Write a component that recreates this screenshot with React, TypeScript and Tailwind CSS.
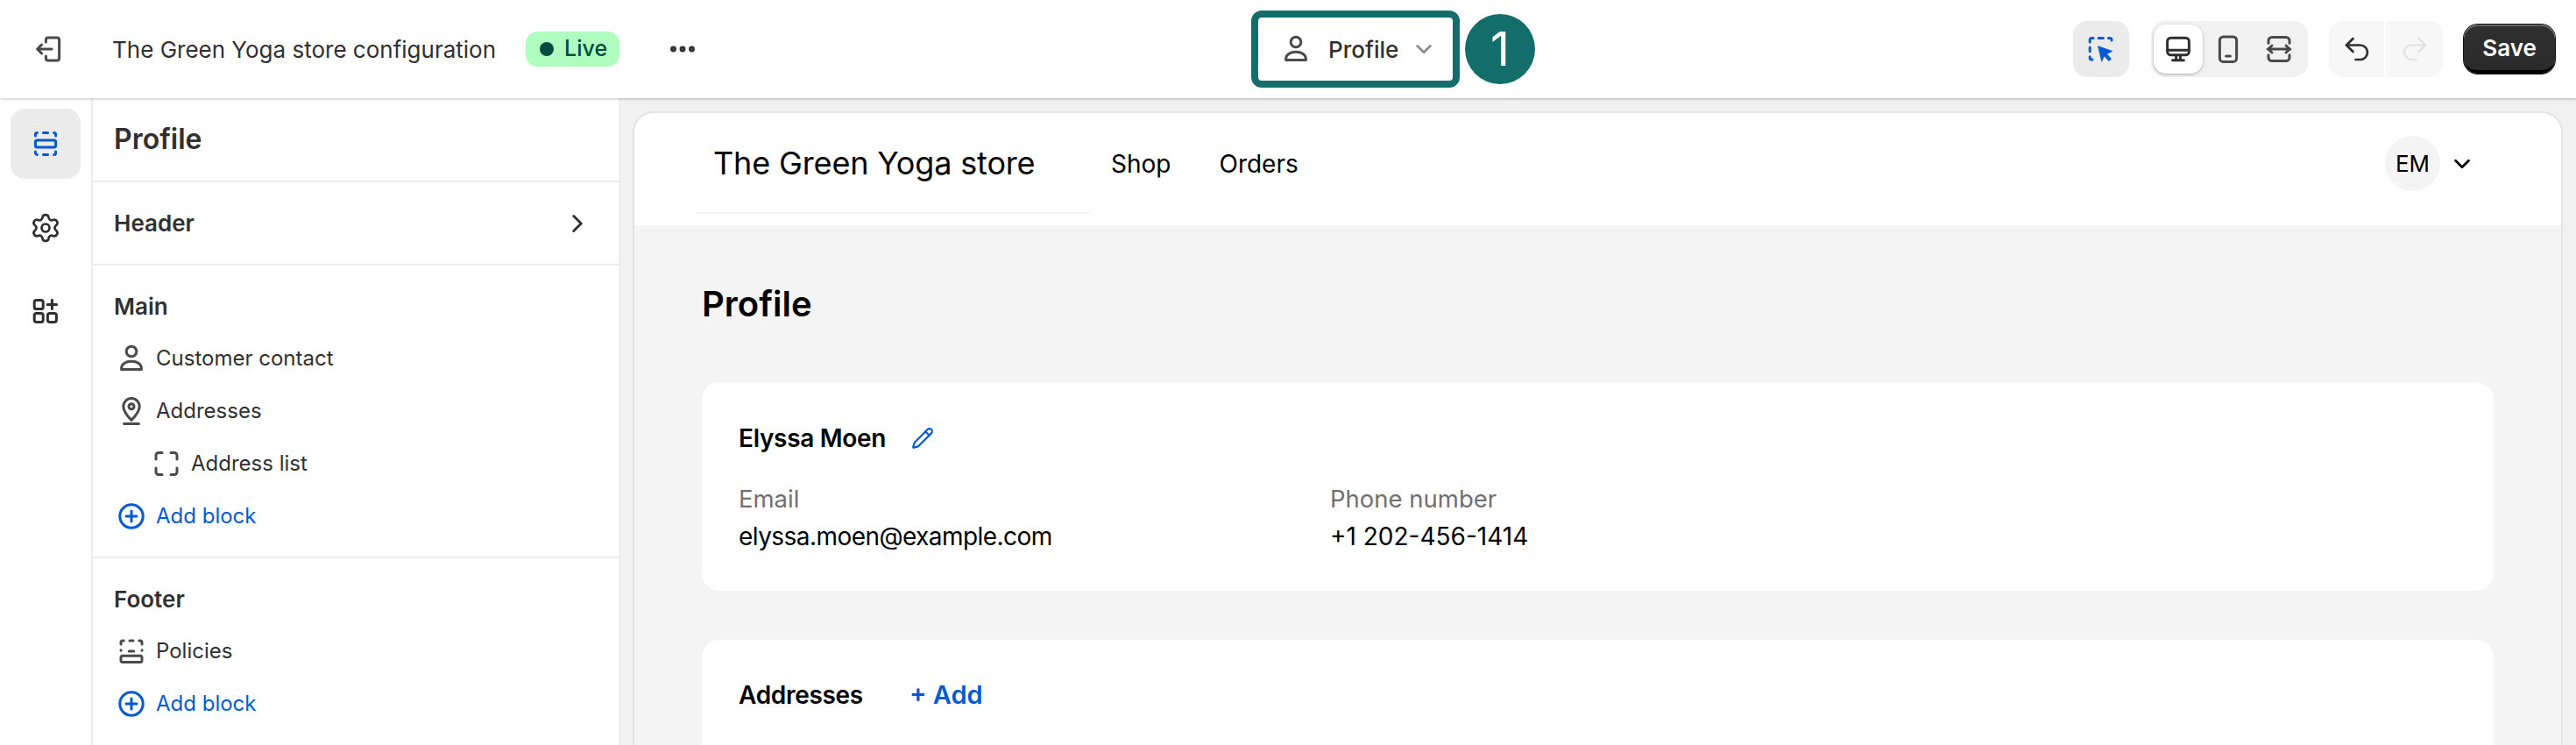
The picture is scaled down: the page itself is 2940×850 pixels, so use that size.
import React from "react";
import { Settings, ChevronDown, ChevronRight, Undo2, Redo2, Ellipsis, Pencil } from "lucide-react";

function ExitIcon() {
  return (
    <svg width="40" height="40" viewBox="0 0 20 20" fill="none" stroke="#4a4a4a" strokeWidth="1.5" strokeLinecap="round" strokeLinejoin="round">
      <path d="M8.2 6V4.8a1.3 1.3 0 0 1 1.3-1.3h5a1.3 1.3 0 0 1 1.3 1.3v10.4a1.3 1.3 0 0 1-1.3 1.3h-5a1.3 1.3 0 0 1-1.3-1.3V14" />
      <path d="M11.5 10H3.5M5.8 7.5 3.3 10l2.5 2.5" />
    </svg>
  );
}

function SectionsIcon({ color = "#005bd3" }: { color?: string }) {
  return (
    <svg width="40" height="40" viewBox="0 0 20 20" fill="none" stroke={color} strokeWidth="1.5" strokeLinecap="round">
      <rect x="4.2" y="8" width="11.6" height="4" rx="1" />
      <path d="M4.2 5.5V4.8a1 1 0 0 1 1-1M8.7 3.8h2.6M14.8 3.8a1 1 0 0 1 1 1v.7" />
      <path d="M4.2 14.5v.7a1 1 0 0 0 1 1M8.7 16.2h2.6M14.8 16.2a1 1 0 0 0 1-1v-.7" />
    </svg>
  );
}

function AppsIcon() {
  return (
    <svg width="40" height="40" viewBox="0 0 20 20" fill="none" stroke="#303030" strokeWidth="1.5" strokeLinecap="round">
      <rect x="3.6" y="3.3" width="5" height="5" rx="1.2" />
      <rect x="3.6" y="10.7" width="5" height="5" rx="1.2" />
      <rect x="11.2" y="10.7" width="5" height="5" rx="1.2" />
      <path d="M13.7 3.1v5.2M11.1 5.7h5.2" />
    </svg>
  );
}

function PersonIcon() {
  return (
    <svg width="40" height="40" viewBox="0 0 20 20" fill="none" stroke="#4a4a4a" strokeWidth="1.5" strokeLinejoin="round">
      <circle cx="10" cy="6" r="2.9" />
      <path d="M4.3 15.6c0-2.4 2.4-4 5.7-4s5.7 1.6 5.7 4v.6H4.3z" />
    </svg>
  );
}

function PinIcon() {
  return (
    <svg width="40" height="40" viewBox="0 0 20 20" fill="none" stroke="#4a4a4a" strokeWidth="1.5" strokeLinecap="round" strokeLinejoin="round">
      <path d="M10 15.2c-2.4-2.4-4.6-5-4.6-7.8a4.6 4.6 0 0 1 9.2 0c0 2.8-2.2 5.4-4.6 7.8z" />
      <circle cx="10" cy="7.4" r="1.5" />
      <path d="M5.8 17.2h8.4" />
    </svg>
  );
}

function BlockIcon() {
  return (
    <svg width="40" height="40" viewBox="0 0 20 20" fill="none" stroke="#4a4a4a" strokeWidth="1.5" strokeLinecap="round">
      <path d="M4 7.5V5.2A1.5 1.5 0 0 1 5.5 3.7h2M12.5 3.7h2A1.5 1.5 0 0 1 16 5.2v2.3" />
      <path d="M4 12.5v2.3a1.5 1.5 0 0 0 1.5 1.5h2M12.5 16.3h2a1.5 1.5 0 0 0 1.5-1.5v-2.3" />
    </svg>
  );
}

function FooterIcon() {
  return (
    <svg width="40" height="40" viewBox="0 0 20 20" fill="none" stroke="#4a4a4a" strokeWidth="1.5" strokeLinecap="round">
      <rect x="4" y="12.6" width="12" height="3.6" rx="1" />
      <path d="M4 6V5a1 1 0 0 1 1-1h.6M9 4h2M14.4 4h.6a1 1 0 0 1 1 1v1M4 9.4v.2M16 9.4v.2M8.6 10h2.8" />
    </svg>
  );
}

function PlusCircleIcon() {
  return (
    <svg width="40" height="40" viewBox="0 0 20 20" fill="none" stroke="#005bd3" strokeWidth="1.5" strokeLinecap="round">
      <circle cx="10" cy="10" r="6.6" />
      <path d="M10 7v6M7 10h6" />
    </svg>
  );
}

function InspectorIcon() {
  return (
    <svg width="40" height="40" viewBox="0 0 20 20" fill="none" stroke="#005bd3" strokeWidth="1.5" strokeLinecap="round">
      <path d="M3.6 6V4.8a1 1 0 0 1 1-1h1M8.6 3.8h2.6M14.2 3.8h.8a1 1 0 0 1 1 1V5M3.6 9v2.4M3.6 14.4v.6a1 1 0 0 0 1 1H5" />
      <path d="M8.4 8.4l8 2.8-3.2 1.5 2.6 2.9-1.4 1.2-2.6-2.9-1.4 3z" fill="#005bd3" strokeWidth="0.4" strokeLinejoin="round" />
    </svg>
  );
}

function DesktopIcon() {
  return (
    <svg width="40" height="40" viewBox="0 0 20 20" fill="none" stroke="#303030" strokeWidth="1.5" strokeLinecap="round">
      <rect x="3.8" y="3.6" width="12.4" height="9.8" rx="2" />
      <path d="M3.8 10.6h12.4M8.8 13.6v2.6M11.2 13.6v2.6M6.8 16.4h6.4" />
    </svg>
  );
}

function PhoneIcon() {
  return (
    <svg width="40" height="40" viewBox="0 0 20 20" fill="none" stroke="#4a4a4a" strokeWidth="1.5" strokeLinecap="round">
      <rect x="5.2" y="3" width="9.6" height="14.2" rx="2" />
      <path d="M8.8 14h2.4" />
    </svg>
  );
}

function FullWidthIcon() {
  return (
    <svg width="40" height="40" viewBox="0 0 20 20" fill="none" stroke="#4a4a4a" strokeWidth="1.5" strokeLinecap="round" strokeLinejoin="round">
      <path d="M4 6.6V5.2a2 2 0 0 1 2-2h8a2 2 0 0 1 2 2v1.4M4 13.4v1.4a2 2 0 0 0 2 2h8a2 2 0 0 0 2-2v-1.4" />
      <path d="M3.6 10h12.8M6 8l-2.2 2L6 12M14 8l2.2 2-2.2 2" />
    </svg>
  );
}

function TreeRow({ icon, label, indent, blue }: { icon: React.ReactNode; label: string; indent?: boolean; blue?: boolean }) {
  return (
    <div className={`h-[60px] flex items-center ${indent ? "pl-[40px]" : ""}`}>
      <span className="w-[40px] flex justify-center shrink-0">{icon}</span>
      <span className={`ml-[8px] text-[24px] ${blue ? "text-[#005bd3]" : "text-[#303030]"}`}>{label}</span>
    </div>
  );
}

function RailButton({ active, children }: { active?: boolean; children: React.ReactNode }) {
  return (
    <div className={`w-[80px] h-[80px] rounded-[16px] flex items-center justify-center ${active ? "bg-[#ebebeb]" : ""}`}>
      {children}
    </div>
  );
}

export default function App() {
  return (
    <div className="w-[2940px] h-[850px] overflow-hidden flex flex-col bg-[#f1f1f1] font-['Inter',sans-serif] text-[#303030]">
      <header className="h-[112px] shrink-0 bg-white flex items-center relative z-10 shadow-[0_1px_3px_rgba(0,0,0,0.25)]">
        <div className="w-[1428px] shrink-0 flex items-center pl-[36px]">
          <ExitIcon />
          <span className="ml-[52px] text-[26px] text-[#303030]">The Green Yoga store configuration</span>
          <span className="ml-[34px] h-[40px] w-[107px] rounded-[14px] bg-[#affebf] flex items-center pl-[16px] gap-[12px] text-[25px] font-[450] text-[#014b40]">
            <span className="w-[16px] h-[16px] rounded-full bg-[#014b40]" />
            Live
          </span>
          <Ellipsis className="ml-[54px] text-[#303030]" size={36} strokeWidth={2.6} />
        </div>

        <div className="relative">
          <div className="w-[238px] h-[88px] border-[8px] border-[#126d6b] rounded-[12px] flex items-center pl-[23px] bg-white">
            <PersonIcon />
            <span className="ml-[17px] text-[26px] font-[550] text-[#303030]">Profile</span>
            <ChevronDown className="ml-[14px] text-[#8a8a8a]" size={30} strokeWidth={2} />
          </div>
          <div className="absolute left-[244px] top-[4px] w-[80px] h-[80px] rounded-full bg-[#126d6b] text-white flex items-center justify-center text-[54px] leading-none">
            1
          </div>
        </div>

        <div className="ml-auto pr-[24px] flex items-center">
          <div className="w-[64px] h-[64px] rounded-[16px] bg-[#ebebeb] flex items-center justify-center">
            <InspectorIcon />
          </div>
          <div className="ml-[25px] w-[179px] h-[64px] rounded-[16px] bg-[#f1f1f1] flex items-center pl-[3px]">
            <div className="w-[56px] h-[56px] rounded-[14px] bg-white shadow-[0_1px_3px_rgba(0,0,0,0.3)] flex items-center justify-center">
              <DesktopIcon />
            </div>
            <div className="w-[58px] flex justify-center"><PhoneIcon /></div>
            <div className="w-[58px] flex justify-center"><FullWidthIcon /></div>
          </div>
          <div className="ml-[24px] w-[130px] h-[64px] rounded-[16px] bg-[#f7f7f7] flex items-center">
            <div className="w-[65px] h-full flex items-center justify-center border-r-2 border-white">
              <Undo2 className="text-[#303030]" size={36} strokeWidth={1.8} />
            </div>
            <div className="w-[65px] flex justify-center">
              <Redo2 className="text-[#e3e3e3]" size={36} strokeWidth={1.8} />
            </div>
          </div>
          <button className="ml-[24px] w-[104px] h-[56px] rounded-[16px] bg-gradient-to-b from-[#303030] to-[#2a2a2a] border-b-[4px] border-black shadow-[inset_0_2px_0_rgba(255,255,255,0.25),0_0_0_1px_#111] text-white text-[26px] font-[600]">
            Save
          </button>
        </div>
      </header>

      <div className="flex-1 flex min-h-0">
        <nav className="w-[106px] shrink-0 bg-white border-r-2 border-[#ebebeb] flex flex-col items-center pt-[12px] gap-[16px]">
          <RailButton active><SectionsIcon /></RailButton>
          <RailButton><Settings className="text-[#303030]" size={36} strokeWidth={1.8} /></RailButton>
          <RailButton><AppsIcon /></RailButton>
        </nav>

        <aside className="w-[600px] shrink-0 bg-white flex flex-col text-[#303030]">
          <div className="h-[96px] shrink-0 flex items-center pl-[24px] border-b-2 border-[#ebebeb] text-[32px] font-[600]">
            Profile
          </div>
          <div className="h-[95px] shrink-0 flex items-center justify-between pl-[24px] pr-[30px] border-b-2 border-[#ebebeb]">
            <span className="text-[26px] font-[600]">Header</span>
            <ChevronRight size={34} strokeWidth={2} />
          </div>
          <div className="h-[334px] shrink-0 border-b-2 border-[#ebebeb] pl-[24px] pt-[16px]">
            <div className="h-[60px] flex items-center text-[26px] font-[600]">Main</div>
            <TreeRow icon={<PersonIcon />} label="Customer contact" />
            <TreeRow icon={<PinIcon />} label="Addresses" />
            <TreeRow icon={<BlockIcon />} label="Address list" indent />
            <TreeRow icon={<PlusCircleIcon />} label="Add block" blue />
          </div>
          <div className="pl-[24px] pt-[16px]">
            <div className="h-[60px] flex items-center text-[26px] font-[600]">Footer</div>
            <TreeRow icon={<FooterIcon />} label="Policies" />
            <TreeRow icon={<PlusCircleIcon />} label="Add block" blue />
          </div>
        </aside>

        <main className="flex-1 min-w-0 pl-[14px] pr-[15px] pt-[15px] border-l-2 border-[#ebebeb]">
          <div className="h-[800px] rounded-t-[24px] border-2 border-b-0 border-[#e3e3e3] bg-[#f4f4f4] overflow-hidden">
            <div className="h-[128px] pb-[13px] bg-white flex items-center">
              <div className="ml-[70px] w-[450px] h-[115px] border-b-2 border-[#f4f4f4] pl-[20px] flex items-center text-[36px] tracking-[-0.15px] text-black">
                The Green Yoga store
              </div>
              <span className="ml-[24px] text-[28px] text-black">Shop</span>
              <span className="ml-[55px] text-[28px] text-black">Orders</span>
              <div className="ml-auto mr-[98px] flex items-center">
                <div className="w-[63px] h-[63px] rounded-full bg-[#f4f4f4] flex items-center justify-center text-[26px] text-black">EM</div>
                <ChevronDown className="ml-[10px] text-black" size={30} strokeWidth={2.2} />
              </div>
            </div>

            <div className="pl-[77px] pr-[77px]">
              <h1 className="mt-[66px] h-[48px] flex items-center text-[40px] font-[600] text-black">Profile</h1>
              <section className="mt-[65px] h-[238px] rounded-[20px] bg-white pl-[42px] pt-[46px] text-black">
                <div className="flex items-center h-[36px]">
                  <span className="text-[28px] tracking-[-0.3px] font-[600]">Elyssa Moen</span>
                  <Pencil className="ml-[29px] text-[#005bd3]" size={26} strokeWidth={2} />
                </div>
                <div className="mt-[31px] flex text-[28px]">
                  <div className="w-[675px]">
                    <div className="text-[27.5px] text-[#707070]">Email</div>
                    <div className="mt-[1px] tracking-[-0.55px]">elyssa.moen@example.com</div>
                  </div>
                  <div>
                    <div className="text-[27.5px] text-[#707070]">Phone number</div>
                    <div className="mt-[1px]">+1 202-456-1414</div>
                  </div>
                </div>
              </section>
              <section className="mt-[56px] h-[300px] rounded-[20px] bg-white pl-[42px] pt-[46px]">
                <div className="flex items-center h-[34px]">
                  <span className="text-[28px] tracking-[-0.3px] font-[600] text-black">Addresses</span>
                  <span className="ml-[53px] text-[29px] font-[600] text-[#005bd3]">+ Add</span>
                </div>
              </section>
            </div>
          </div>
        </main>
      </div>
    </div>
  );
}
